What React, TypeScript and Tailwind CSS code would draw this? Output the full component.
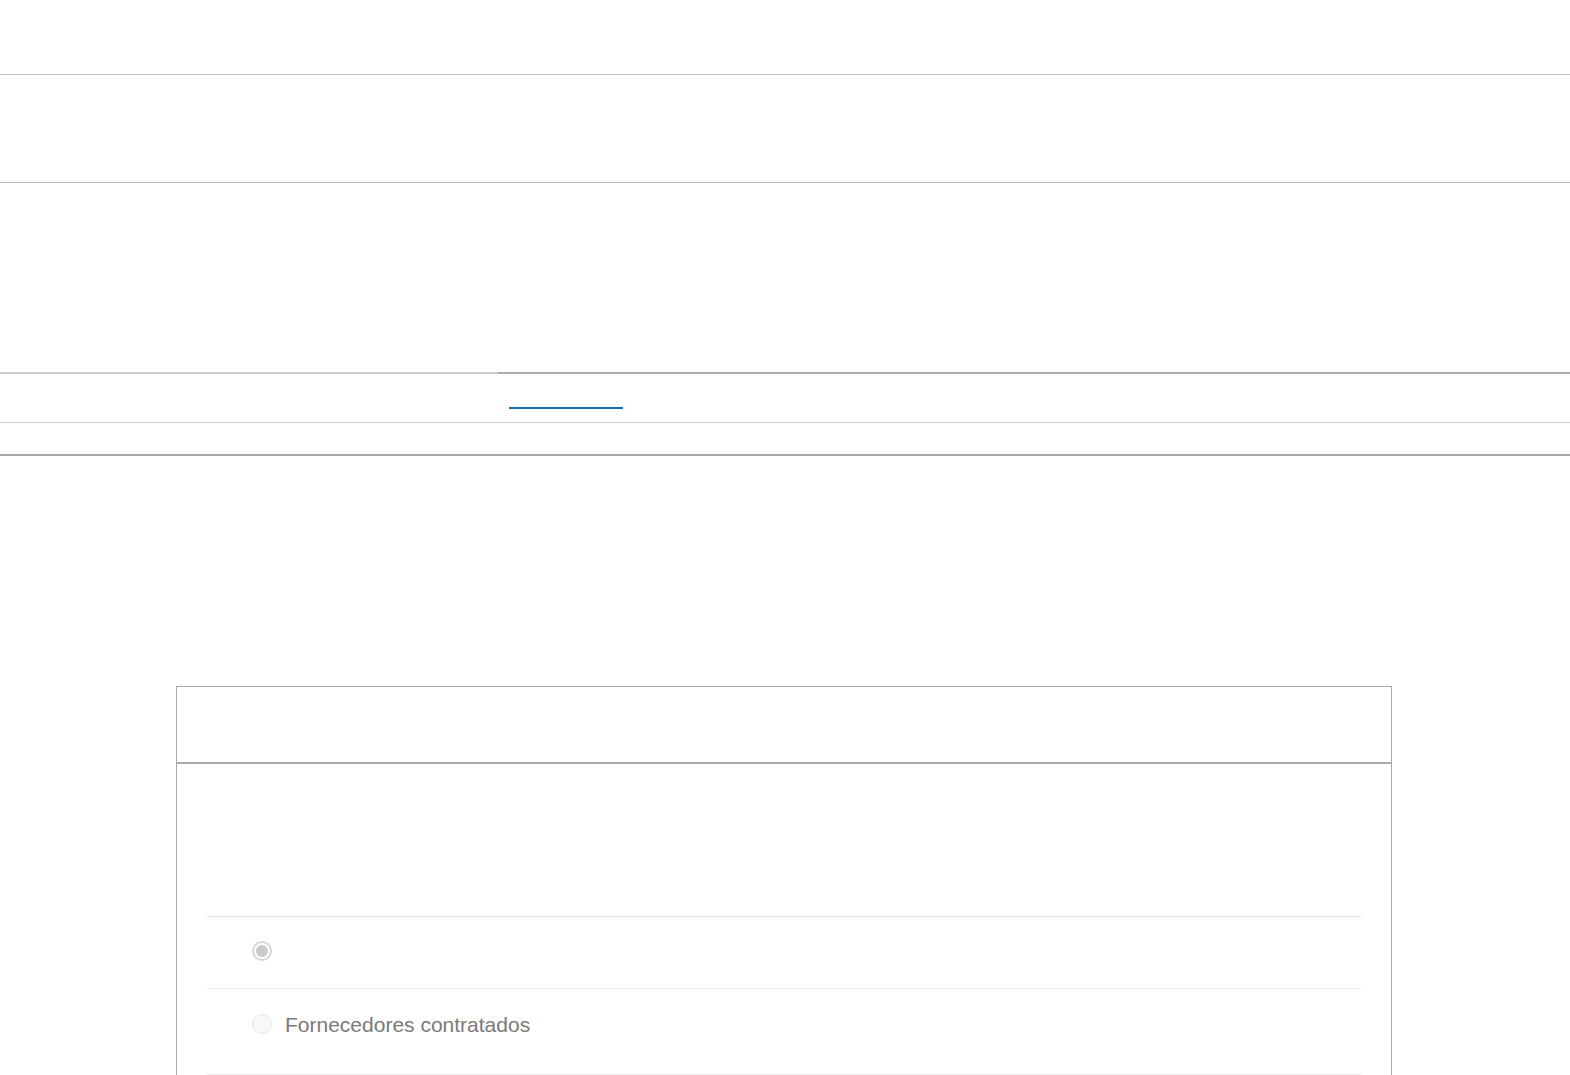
import React from "react";

function Radio({ checked }: { checked?: boolean }) {
  return (
    <span
      className={
        "flex h-[20px] w-[20px] shrink-0 items-center justify-center rounded-full " +
        (checked ? "border-2 border-[#d6d6d6] bg-white" : "border border-[#e4e4e4] bg-[#f8f8f8]")
      }
    >
      {checked && <span className="h-[12px] w-[12px] rounded-full bg-[#cacaca]" />}
    </span>
  );
}

export default function App() {
  return (
    <div className="min-h-[1075px] bg-white font-['Liberation_Sans',Arial,sans-serif]">
      <div className="h-[74px]" />
      <div className="h-[109px] border-y border-[#bdbdbd]" />
      <div className="h-[189px]" />

      {/* tabs */}
      <div className="flex h-[2px]">
        <div className="w-[498px] bg-[#c9cdd1]" />
        <div className="flex-1 bg-[#a6acb1]" />
      </div>
      <div className="flex h-[49px] border-b border-[#cccccc] pl-[509px]">
        <div className="mt-[33px] h-[2px] w-[114px] bg-[#0a73b8]" />
      </div>
      <div className="h-[33px] border-b-2 border-[#a8a8a8]" />

      <div className="h-[230px]" />

      {/* card */}
      <div className="mx-[176px] w-[1216px] border border-b-0 border-[#aaaaaa]">
        <div className="h-[77px] border-b-2 border-[#aaaaaa]" />
        <div className="px-[30px] pt-[152px]">
          <div className="flex h-[72px] items-center border-t border-[#dddddd] pb-[3px] pl-[45px]">
            <Radio checked />
          </div>
          <div className="flex h-[87px] items-start border-y border-[#eeeeee] pl-[45px] pt-[25px]">
            <Radio />
            <span className="ml-[13px] text-[21px] leading-[21px] text-[#7a7a7a]">
              Fornecedores contratados
            </span>
          </div>
        </div>
      </div>
    </div>
  );
}
